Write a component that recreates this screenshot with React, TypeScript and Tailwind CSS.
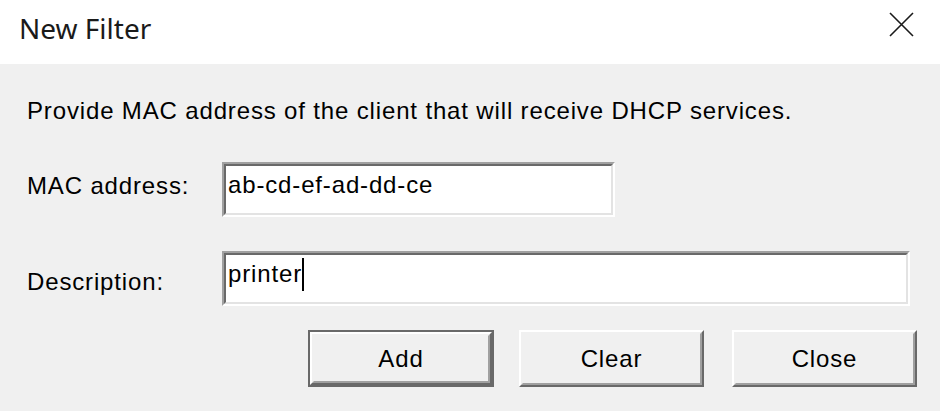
const sans = "font-['Liberation_Sans',Arial,sans-serif]"

function Sunken({ className, children }: { className?: string; children: React.ReactNode }) {
  return (
    <div className={`border-2 border-t-[#a0a0a0] border-l-[#a0a0a0] border-b-white border-r-white ${className ?? ""}`}>
      <div className="h-full border-2 border-t-[#696969] border-l-[#696969] border-b-[#e3e3e3] border-r-[#e3e3e3] bg-white flex items-start pl-[2px] pt-[6px]">
        {children}
      </div>
    </div>
  )
}

function Button({ label, primary }: { label: string; primary?: boolean }) {
  const face = (
    <div className="h-full border-2 border-t-white border-l-white border-b-[#696969] border-r-[#696969]">
      <div className="h-full border-2 border-t-[#f0f0f0] border-l-[#f0f0f0] border-b-[#a0a0a0] border-r-[#a0a0a0] flex items-center justify-center text-[24px] tracking-[0.85px] text-black">
        {label}
      </div>
    </div>
  )
  if (primary) {
    return <div className="w-[186px] h-[57px] border-2 border-[#696969] bg-[#f0f0f0]">{face}</div>
  }
  return <div className="w-[185px] h-[57px] bg-[#f0f0f0]">{face}</div>
}

export default function App() {
  return (
    <div className={`w-[940px] h-[411px] flex flex-col bg-[#f0f0f0] ${sans}`}>
      <div className="h-16 shrink-0 bg-white flex items-start justify-between pl-[19px] pr-[26px]">
        <span className="mt-[14px] font-['Noto_Sans',sans-serif] text-[28px] text-[#1a1a1a] leading-none">New Filter</span>
        <svg width="25" height="25" viewBox="0 0 25 25" className="mt-[12px]">
          <path d="M1 1 L24 24 M24 1 L1 24" stroke="#1a1a1a" strokeWidth="1.6" fill="none" />
        </svg>
      </div>
      <div className="flex-1 flex flex-col pl-[27px] text-[24px] leading-[26px] tracking-[0.85px] text-black">
        <p className="mt-[34px]">
          Provide MAC address of the client that will receive DHCP services.
        </p>
        <div className="mt-[38px] flex items-start">
          <span className="w-[195px] pt-[11px]">MAC address:</span>
          <Sunken className="w-[393px] h-[55px]">
            <span>ab-cd-ef-ad-dd-ce</span>
          </Sunken>
        </div>
        <div className="mt-[34px] flex items-start">
          <span className="w-[195px] pt-[18px]">Description:</span>
          <Sunken className="w-[688px] h-[55px]">
            <span>printer</span>
            <span className="-mt-[3px] w-[2px] h-[33px] bg-black" />
          </Sunken>
        </div>
        <div className="mt-[24px] flex pl-[281px]">
          <Button label="Add" primary />
          <div className="w-[25px]" />
          <Button label="Clear" />
          <div className="w-[28px]" />
          <Button label="Close" />
        </div>
      </div>
    </div>
  )
}
